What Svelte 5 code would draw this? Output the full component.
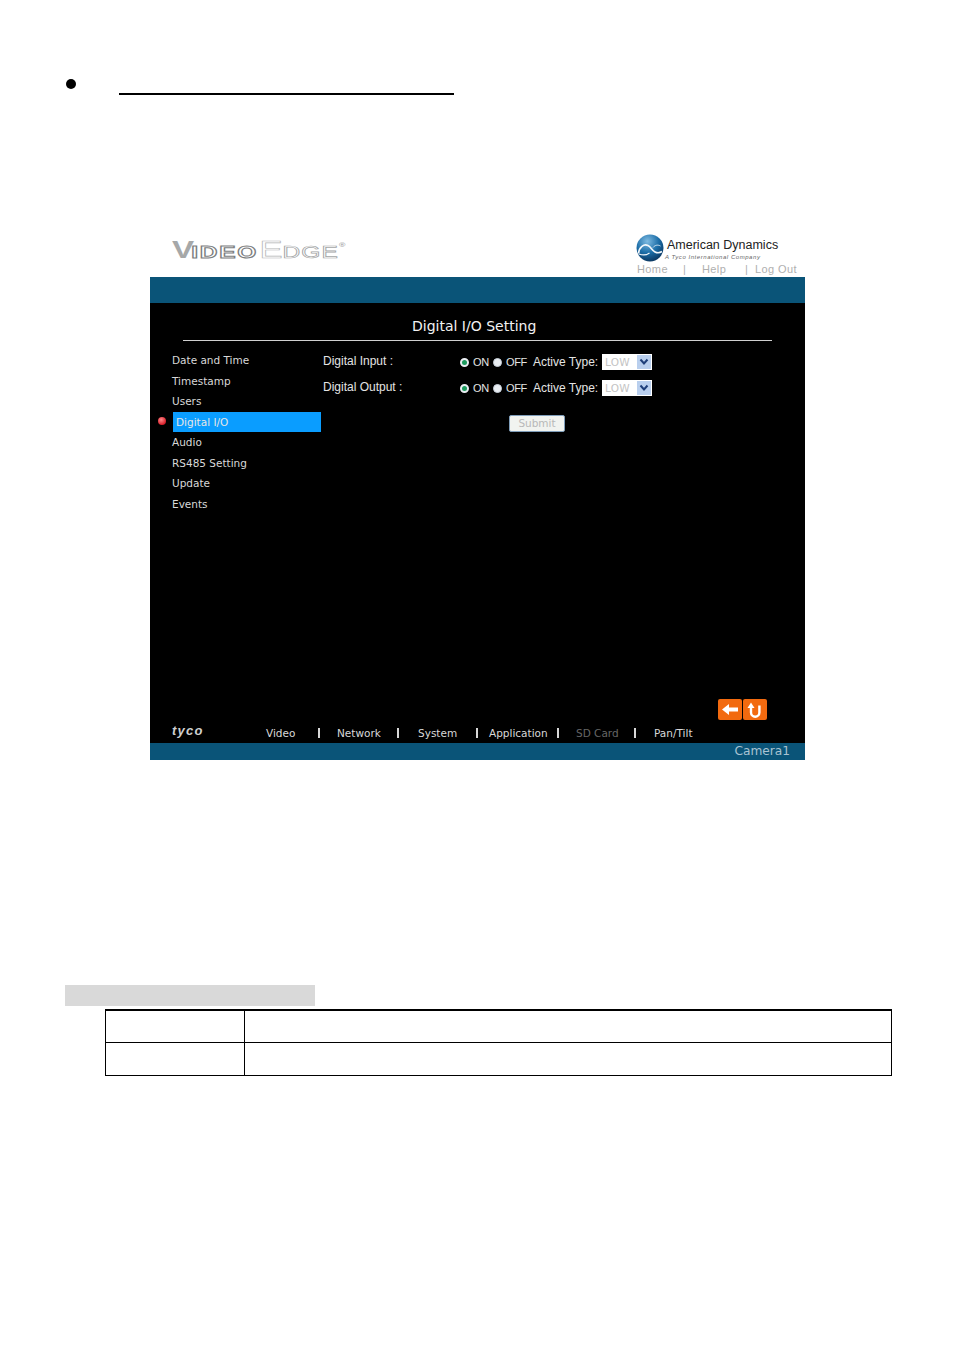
<script>
  const menu = ["Date and Time", "Timestamp", "Users", "Digital I/O", "Audio", "RS485 Setting", "Update", "Events"];
  const active = "Digital I/O";

  const rows = ["Digital Input :", "Digital Output :"];

  // width = distance to next label, sepRight = separator's distance from the end of that cell
  const nav = [
    { label: "Video", width: 71, sepRight: 17 },
    { label: "Network", width: 81, sepRight: 19 },
    { label: "System", width: 71, sepRight: 11 },
    { label: "Application", width: 87, sepRight: 17 },
    { label: "SD Card", width: 78, sepRight: 18, off: true },
    { label: "Pan/Tilt", width: 60 }
  ];
</script>

<div class="page">
  <div class="heading">
    <span class="bullet"></span>
    <span class="heading-line"></span>
  </div>

  <div class="shot">
    <header class="top">
      <div class="brand"><span class="v">V</span><span class="ideo">IDEO</span><span class="edge">E</span><span class="dge">DGE</span><sup>®</sup></div>
      <div class="corp">
        <div class="corp-main">
          <svg class="globe" viewBox="0 0 28 28" aria-hidden="true">
            <defs>
              <radialGradient id="g" cx="0.4" cy="0.25" r="0.85">
                <stop offset="0" stop-color="#7fbbe2" />
                <stop offset="0.5" stop-color="#1c6ea8" />
                <stop offset="1" stop-color="#06294f" />
              </radialGradient>
            </defs>
            <circle cx="14" cy="14" r="13.5" fill="url(#g)" />
            <path d="M2.500 19.500C3 13 8 9.500 12 11.500c3 1.500 4 5 7 6.500 2.500 1.200 5 .8 7-.5" fill="none" stroke="#f2f7fb" stroke-width="1.700" />
            <path d="M3 20c4 1.500 8 1 10.500-1" fill="none" stroke="#f2f7fb" stroke-width="1.200" />
            <path d="M17 13.500c2-2.500 5-3 7.500-1.500" fill="none" stroke="#d5e6f3" stroke-width="1" />
          </svg>
          <div class="corp-text">
            <div class="corp-name">American Dynamics</div>
            <div class="corp-sub">A Tyco International Company</div>
          </div>
        </div>
        <div class="toplinks">
          <span class="l-home">Home</span><span class="l-sep1">|</span><span class="l-help">Help</span><span class="l-sep2">|</span><span>Log Out</span>
        </div>
      </div>
    </header>

    <div class="band"></div>

    <main class="panel">
      <h1>Digital I/O Setting</h1>
      <div class="rule"></div>

      <div class="body">
        <ul class="menu">
          {#each menu as item}
            <li class:active={item === active}>{item}</li>
          {/each}
        </ul>

        <div class="form">
          {#each rows as label}
            <div class="row">
              <span class="label">{label}</span>
              <span class="radio on"></span>
              <span class="opt">ON</span>
              <span class="radio"></span>
              <span class="opt off">OFF</span>
              <span class="type">Active Type:</span>
              <span class="select">
                <span class="val">LOW</span>
                <span class="arrow">
                  <svg viewBox="0 0 10 8" width="10" height="8" aria-hidden="true"><path d="M1.500 1.500 5 5.500l3.500-4" fill="none" stroke="#1f3f7a" stroke-width="2" /></svg>
                </span>
              </span>
            </div>
          {/each}
          <button class="submit" type="button">Submit</button>
        </div>
      </div>

      <div class="actions">
        <span class="act">
          <svg viewBox="0 0 24 21" width="24" height="21" aria-hidden="true"><path d="M4 10.500 11 5v3.500h9v4h-9V16z" fill="#fff" /></svg>
        </span>
        <span class="act">
          <svg viewBox="0 0 24 21" width="24" height="21" aria-hidden="true"><path d="M8 8v5.500a4.200 4.200 0 0 0 8.400 0V6.500" fill="none" stroke="#fff" stroke-width="2.400" /><path d="M4.500 9 8 3.500 11.500 9z" fill="#fff" /></svg>
        </span>
      </div>

      <footer class="foot">
        <span class="tyco">tyco</span>
        <nav class="nav">
          {#each nav as n}
            <span class="nav-cell" class:off={n.off} style="width: {n.width}px">
              <span>{n.label}</span>
              {#if n.sepRight}<span class="nav-sep" style="right: {n.sepRight}px"></span>{/if}
            </span>
          {/each}
        </nav>
      </footer>
    </main>

    <div class="status">Camera1</div>
  </div>

  <div class="grey"></div>

  <div class="table">
    <div class="cell first"></div>
    <div class="cell"></div>
    <div class="cell first"></div>
    <div class="cell"></div>
  </div>
</div>

<style>
  :global(body) {
    margin: 0;
    background: #fff;
  }

  .page {
    height: 1355px;
    padding-top: 79px;
    box-sizing: border-box;
    font-family: "DejaVu Sans", sans-serif;
  }

  .heading {
    display: flex;
    height: 150px;
    padding-left: 66px;
    gap: 43px;
  }

  .bullet {
    width: 10px;
    height: 10px;
    border-radius: 50%;
    background: #000;
  }

  .heading-line {
    width: 335px;
    height: 2px;
    margin-top: 14px;
    background: #000;
  }

  .shot {
    width: 655px;
    margin-left: 150px;
  }

  .top {
    display: flex;
    justify-content: space-between;
    height: 48px;
    background: #fff;
  }

  .brand {
    margin: 8px 0 0 22px;
    height: 26px;
    font-family: "Liberation Sans", sans-serif;
    line-height: 26px;
    white-space: nowrap;
    transform: scaleX(1.44);
    transform-origin: left center;
  }

  .v {
    font-size: 23px;
    font-weight: 700;
    color: #a6a8a8;
  }

  .ideo {
    margin-left: -2px;
    font-size: 17px;
    font-weight: 700;
    letter-spacing: 1.2px;
    color: #fff;
    -webkit-text-stroke: 1px #7b7d7e;
  }

  .edge {
    margin-left: 1px;
    font-size: 24px;
    color: #fff;
    -webkit-text-stroke: 0.6px #b5b7b8;
  }

  .dge {
    font-size: 17px;
    letter-spacing: 0.8px;
    color: #fff;
    -webkit-text-stroke: 0.7px #a3a5a6;
  }

  sup {
    font-size: 6px;
    vertical-align: 11px;
    line-height: 0;
    color: #888;
  }

  .corp {
    width: 169px;
    padding-top: 5px;
    font-family: "Liberation Sans", sans-serif;
  }

  .corp-main {
    display: flex;
    height: 29px;
  }

  .globe {
    width: 28px;
    height: 28px;
    flex: none;
  }

  .corp-text {
    margin-left: 3px;
    padding-top: 4px;
  }

  .corp-name {
    font-size: 12.5px;
    line-height: 15px;
    color: #222;
    white-space: nowrap;
  }

  .corp-sub {
    margin: 0 0 0 -2px;
    font-size: 6px;
    font-style: italic;
    line-height: 9px;
    letter-spacing: 0.55px;
    color: #666;
    white-space: nowrap;
  }

  .toplinks {
    display: flex;
    margin-left: 1px;
    font-size: 11px;
    line-height: 13px;
    letter-spacing: 0.4px;
    color: #b0b0b0;
    white-space: nowrap;
  }

  .l-home { width: 46px; }
  .l-sep1 { width: 19px; }
  .l-help { width: 43px; }
  .l-sep2 { width: 10px; }

  .band {
    height: 26px;
    background: #0a5478;
  }

  .panel {
    display: flex;
    flex-direction: column;
    height: 440px;
    background: #000;
    color: #d8d8d8;
    font-size: 10.5px;
  }

  h1 {
    margin: 14px 0 0;
    padding-left: 262px;
    font-size: 14px;
    font-weight: 400;
    line-height: 18px;
    color: #f2f2f2;
    white-space: nowrap;
  }

  .rule {
    height: 1px;
    margin: 5px 33px 0;
    background: #d0d0d0;
  }

  .body {
    display: flex;
    height: 349px;
    margin-top: 9px;
  }

  .menu {
    flex: none;
    width: 151px;
    margin: 0;
    padding: 0 0 0 22px;
    list-style: none;
  }

  .menu li {
    position: relative;
    height: 20.5px;
    line-height: 20px;
    white-space: nowrap;
  }

  .menu li.active {
    width: 148px;
    margin-left: 1px;
    background: #0a9dff;
    padding-left: 3px;
    box-sizing: border-box;
    color: #e6e6e6;
  }

  .menu li.active::before {
    content: "";
    position: absolute;
    left: -15px;
    top: 5px;
    width: 8px;
    height: 8px;
    border-radius: 50%;
    background: radial-gradient(circle at 40% 35%, #ff8a8a, #d81e2a 70%);
  }

  .form {
    padding-top: 4px;
    font-family: "Liberation Sans", sans-serif;
    font-size: 12px;
    color: #e4e4e4;
  }

  .row {
    display: flex;
    align-items: center;
    height: 16px;
    margin-bottom: 9.5px;
    white-space: nowrap;
  }

  .label {
    width: 137px;
    font-size: 12px;
    margin-top: -2px;
  }

  .radio {
    flex: none;
    box-sizing: border-box;
    width: 9px;
    height: 9px;
    margin-top: 1px;
    border-radius: 50%;
    background: #e9edf2;
    border: 1px solid #c9d2dc;
  }

  .radio.on {
    background: #1b9a5c;
    border: 2px solid #e9edf2;
  }

  .opt {
    width: 20px;
    margin-left: 4px;
    font-size: 11px;
    letter-spacing: -0.4px;
  }

  .opt.off {
    width: 26px;
    margin-left: 4px;
  }

  .type {
    width: 69px;
    margin-left: 1px;
    font-size: 12px;
  }

  .select {
    display: flex;
    align-items: center;
    justify-content: space-between;
    box-sizing: border-box;
    width: 50px;
    height: 16px;
    padding: 0 1px 0 3px;
    background: #fff;
    color: #c4c4c4;
    font-family: "DejaVu Sans", sans-serif;
    font-size: 10.5px;
    letter-spacing: 0.3px;
  }

  .arrow {
    display: flex;
    align-items: center;
    justify-content: center;
    width: 14px;
    height: 14px;
    background: #b9cfee;
  }

  .submit {
    display: block;
    box-sizing: border-box;
    width: 56px;
    height: 17px;
    margin: 19px 0 0 186px;
    padding: 0;
    border: 1px solid #7f9db9;
    border-radius: 2px;
    background: #f1f3f0;
    color: #b8b8b8;
    font-family: "DejaVu Sans", sans-serif;
    font-size: 10.5px;
  }

  .actions {
    display: flex;
    justify-content: flex-end;
    gap: 1px;
    height: 21px;
    padding-right: 38px;
  }

  .act {
    display: flex;
    width: 24px;
    height: 21px;
    border-radius: 2px;
    background: #f26a0f;
  }

  .foot {
    display: flex;
    align-items: flex-end;
    height: 22px;
    padding-left: 22px;
  }

  .tyco {
    width: 94px;
    margin-bottom: 4px;
    font-family: "Liberation Sans", sans-serif;
    font-size: 13px;
    font-style: italic;
    font-weight: 700;
    letter-spacing: 1.2px;
    color: #d0d0d0;
  }

  .nav {
    display: flex;
    height: 14px;
    margin-bottom: 2px;
    line-height: 14px;
    white-space: nowrap;
  }

  .nav-cell {
    position: relative;
    display: block;
    flex: none;
  }

  .nav-cell.off {
    color: #666;
  }

  .nav-sep {
    position: absolute;
    top: 2px;
    width: 2px;
    height: 10px;
    background: #d8d8d8;
  }

  .status {
    height: 17px;
    padding-right: 15px;
    background: #0a5478;
    color: #a9c3d2;
    font-size: 12.2px;
    line-height: 16px;
    text-align: right;
  }

  .grey {
    width: 250px;
    height: 21px;
    margin: 225px 0 0 65px;
    background: #d9d9d9;
  }

  .table {
    display: grid;
    grid-template-columns: 139px 1fr;
    grid-template-rows: 32px 33px;
    box-sizing: border-box;
    width: 787px;
    height: 67px;
    margin: 3px 0 0 105px;
    border-top: 2px solid #000;
    border-left: 1px solid #000;
    border-right: 1px solid #000;
  }

  .cell {
    border-bottom: 1px solid #000;
  }

  .cell.first {
    border-right: 1px solid #000;
  }
</style>
